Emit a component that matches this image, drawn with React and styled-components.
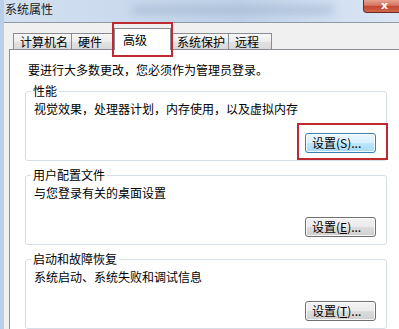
import styled, { createGlobalStyle } from "styled-components";

const GlobalStyle = createGlobalStyle`
  html, body {
    margin: 0;
    padding: 0;
    background: #f0f0f0;
    overflow: hidden;
  }
  * {
    box-sizing: border-box;
  }
`;

const Window = styled.div`
  width: 399px;
  height: 329px;
  overflow: hidden;
  display: flex;
  flex-direction: column;
  background: #f0f0f0;
  border-left: 4px solid #b9cfe8;
  font-family: "Noto Sans CJK SC", "Noto Sans", sans-serif;
  font-size: 12px;
  color: #000;
`;

const TitleBar = styled.div`
  height: 23px;
  flex: none;
  display: flex;
  justify-content: space-between;
  align-items: flex-start;
  margin-left: -4px;
  padding-left: 5px;
  background: linear-gradient(90deg, #d3e1f1 0%, #c9d9ec 35%, #bfd1e8 60%, #d2e0f1 85%, #dbe7f4 100%);
  border-bottom: 1px solid #8d9aa8;
`;

const Title = styled.div`
  font-size: 12px;
  line-height: 14px;
  padding-top: 2px;
  color: #1a1a1a;
`;

const Blur = styled.div`
  flex: 1;
  height: 6px;
  margin: 7px 30px 0 80px;
  background: #8fa5c2;
  filter: blur(4px);
  opacity: 0.6;
`;

const CloseButton = styled.div`
  width: 43px;
  height: 13px;
  margin-right: -7px;
  border: 1px solid #6b2b20;
  border-top: none;
  border-radius: 0 0 4px 4px;
  background: linear-gradient(#e8a293 0%, #d4735e 45%, #c3462f 55%, #d2684f 100%);
  color: #fff;
  font: bold 11px/11px "DejaVu Sans", sans-serif;
  text-align: center;
`;

const Body = styled.div`
  flex: 1;
  display: flex;
  flex-direction: column;
  padding-left: 5px;
`;

const TabRow = styled.div`
  height: 26px;
  flex: none;
  display: flex;
  align-items: flex-end;
  padding-left: 4px;
`;

const Tab = styled.div`
  position: relative;
  width: ${({ $w }) => $w}px;
  height: ${({ $active }) => ($active ? 22 : 16)}px;
  margin: ${({ $active }) => ($active ? "0 -1px -1px -2px" : "0")};
  z-index: ${({ $active }) => ($active ? 2 : 1)};
  border: 1px solid #898c95;
  border-bottom: none;
  border-right: ${({ $last, $active }) => ($last || $active ? "1px solid #898c95" : "none")};
  background: ${({ $active }) =>
    $active
      ? "#ffffff"
      : "linear-gradient(#f7f7f7 0%, #ececec 50%, #e2e2e2 51%, #d9d9d9 100%)"};
  padding: ${({ $active }) => ($active ? "3px 0 0 8px" : "0 0 0 6px")};
  line-height: 15px;
  white-space: nowrap;

  ${({ $marked }) =>
    $marked &&
    `
    &::after {
      content: "";
      position: absolute;
      top: -7px;
      bottom: -7px;
      left: -3px;
      right: -3px;
      border: 2px solid #bf2a30;
    }
  `}
`;

const Panel = styled.div`
  flex: 1;
  background: #ffffff;
  border-top: 1px solid #898c95;
  border-left: 1px solid #898c95;
  padding: 12px 0 0 15px;
`;

const Intro = styled.div`
  line-height: 16px;
  padding-left: 3px;
  margin-bottom: 13px;
`;

const Group = styled.div`
  position: relative;
  width: 362px;
  border: 1px solid #d5dfe5;
  border-radius: 3px;
  padding: 9px 10px 7px 8px;
  margin-bottom: 14px;
`;

const GroupLabel = styled.div`
  position: absolute;
  top: -9px;
  left: 5px;
  padding: 0 2px;
  background: #ffffff;
  line-height: 16px;
`;

const Desc = styled.div`
  line-height: 16px;
`;

const ButtonRow = styled.div`
  display: flex;
  justify-content: flex-end;
  margin-top: 16px;
`;

const Button = styled.div`
  position: relative;
  width: 71px;
  height: 20px;
  border: 1px solid ${({ $hot }) => ($hot ? "#3c7fb1" : "#707070")};
  border-radius: 3px;
  background: ${({ $hot }) =>
    $hot
      ? "linear-gradient(#eaf6fd 0%, #d9f0fc 50%, #bee6fd 51%, #a7d9f5 100%)"
      : "linear-gradient(#f2f2f2 0%, #ebebeb 50%, #dddddd 51%, #cfcfcf 100%)"};
  box-shadow: inset 0 0 0 1px rgba(255, 255, 255, 0.8);
  padding-left: 6px;
  line-height: 18px;
  font-size: 12px;
  white-space: nowrap;

  u {
    text-decoration: underline;
  }

  ${({ $marked }) =>
    $marked &&
    `
    &::after {
      content: "";
      position: absolute;
      top: -11px;
      bottom: -8px;
      left: -9px;
      right: -13px;
      border: 2px solid #bf2a30;
    }
  `}
`;

const tabs = [
  { label: "计算机名", w: 58 },
  { label: "硬件", w: 45 },
  { label: "高级", w: 57, active: true },
  { label: "系统保护", w: 58 },
  { label: "远程", w: 44, last: true },
];

const groups = [
  {
    title: "性能",
    desc: "视觉效果，处理器计划，内存使用，以及虚拟内存",
    key: "S",
    hot: true,
  },
  { title: "用户配置文件", desc: "与您登录有关的桌面设置", key: "E", underline: true },
  { title: "启动和故障恢复", desc: "系统启动、系统失败和调试信息", key: "T", underline: true },
];

const App = () => {
  return (
    <>
      <GlobalStyle />
      <Window>
        <TitleBar>
          <Title>系统属性</Title>
          <Blur />
          <CloseButton>x</CloseButton>
        </TitleBar>
        <Body>
          <TabRow>
            {tabs.map((t) => (
              <Tab
                key={t.label}
                $w={t.w}
                $active={t.active}
                $marked={t.active}
                $last={t.last}
              >
                {t.label}
              </Tab>
            ))}
          </TabRow>
          <Panel>
            <Intro>要进行大多数更改，您必须作为管理员登录。</Intro>
            {groups.map((g) => (
              <Group key={g.title}>
                <GroupLabel>{g.title}</GroupLabel>
                <Desc>{g.desc}</Desc>
                <ButtonRow>
                  <Button $hot={g.hot} $marked={g.hot}>
                    设置({g.underline ? <u>{g.key}</u> : g.key})...
                  </Button>
                </ButtonRow>
              </Group>
            ))}
          </Panel>
        </Body>
      </Window>
    </>
  );
};

export default App;
